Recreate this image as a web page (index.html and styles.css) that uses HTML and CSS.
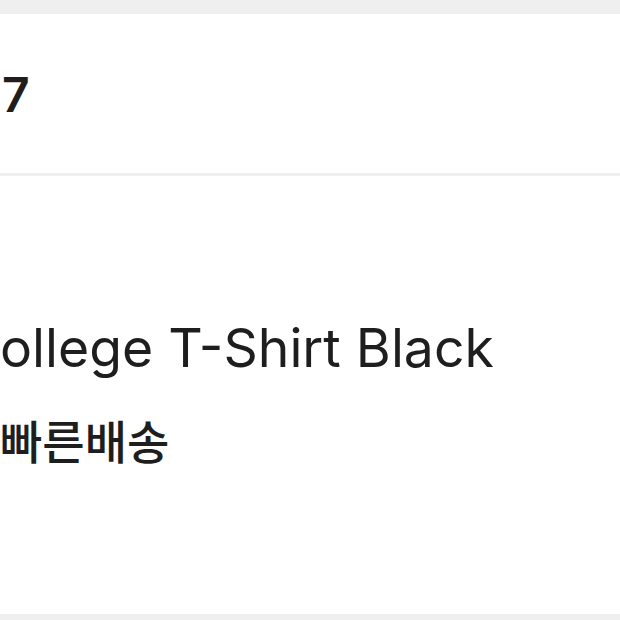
FILE: index.html
```html
<!DOCTYPE html>
<html lang="ko">
<head>
<meta charset="utf-8">
<link rel="stylesheet" href="styles.css">
</head>
<body>
<div class="page">
  <section class="card price-card">
    <span class="price">7</span>
  </section>
  <section class="card product-card">
    <div class="product-name">ollege T-Shirt Black</div>
    <div class="badge">빠른배송</div>
  </section>
</div>
</body>
</html>
```
FILE: styles.css
```css
html, body {
  margin: 0;
  padding: 0;
  background: #efefef;
}
.page {
  width: 620px;
  height: 620px;
  display: flex;
  flex-direction: column;
  gap: 3px;
  padding-top: 14px;
  box-sizing: border-box;
  overflow: hidden;
  font-family: Inter, "Noto Sans CJK KR", sans-serif;
  color: #1e1e1e;
}
.card {
  background: #ffffff;
}
.price-card {
  height: 159px;
  display: flex;
  align-items: center;
  padding-left: 2px;
}
.price {
  font-size: 48px;
  font-weight: 600;
  line-height: 1;
  margin-top: 2px;
}
.product-card {
  height: 438px;
  display: flex;
  flex-direction: column;
  padding-top: 140px;
  box-sizing: border-box;
}
.product-name {
  font-size: 53.5px;
  font-weight: 400;
  line-height: 64px;
  white-space: nowrap;
}
.badge {
  font-family: "Noto Sans CJK KR", sans-serif;
  font-size: 46px;
  font-weight: 500;
  line-height: 60px;
  margin-top: 29px;
}
```
